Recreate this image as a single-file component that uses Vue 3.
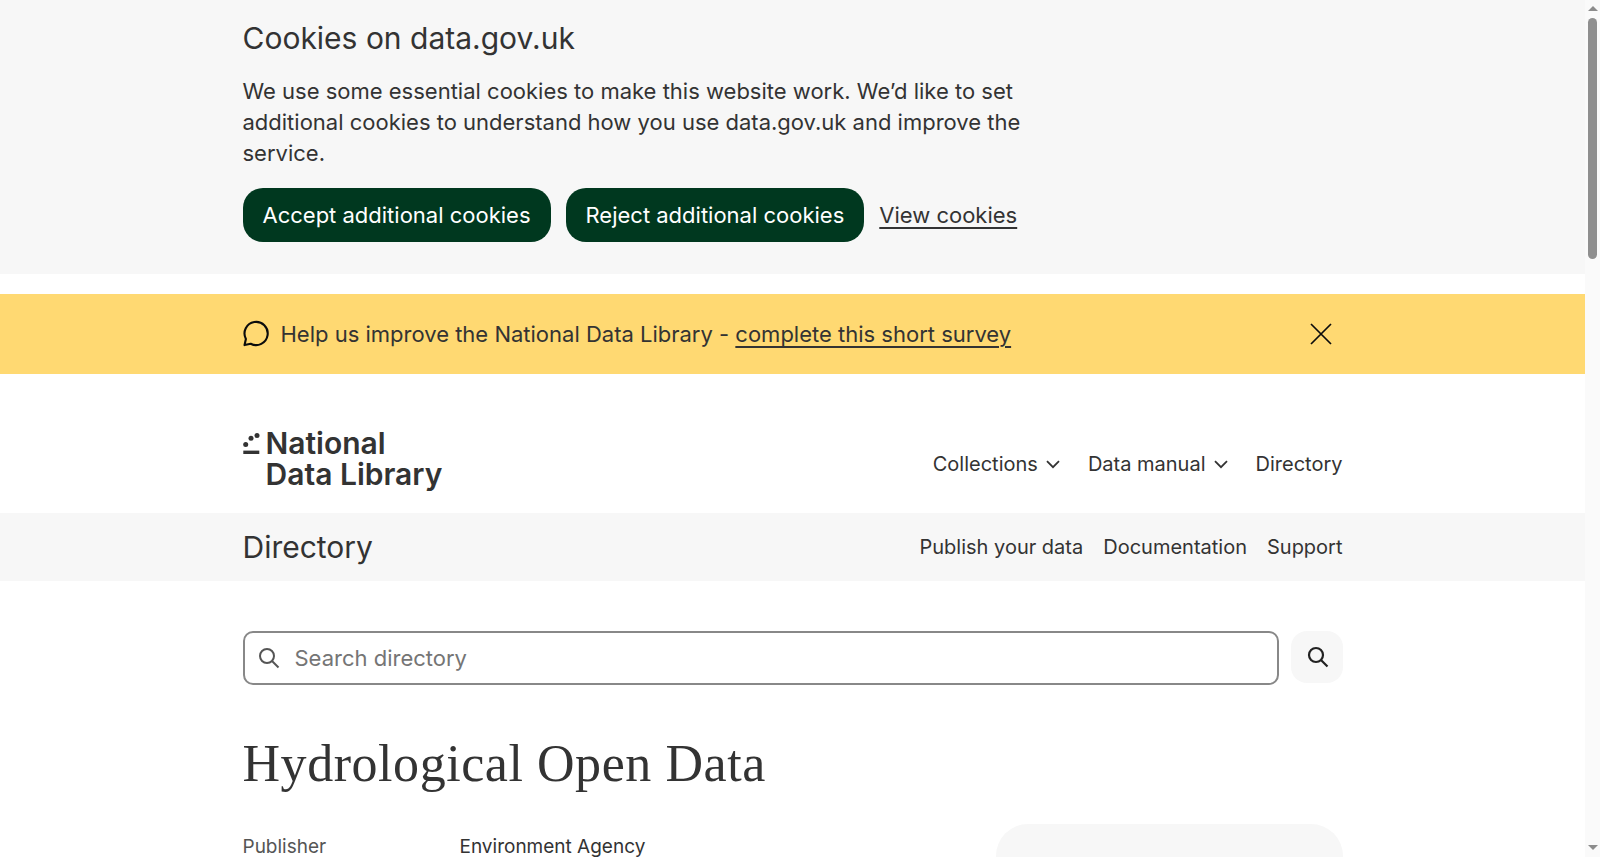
<script setup>
const nav = [
  { label: 'Collections', caret: true },
  { label: 'Data manual', caret: true },
  { label: 'Directory', caret: false }
]
const subNav = ['Publish your data', 'Documentation', 'Support']
</script>

<template>
  <div class="shell">
    <div class="page">
      <section class="cookies">
        <div class="wrap">
          <h2 class="cookiesTitle">Cookies on data.gov.uk</h2>
          <p class="cookiesText">We use some essential cookies to make this website work. We’d like to set additional cookies to understand how you use data.gov.uk and improve the service.</p>
          <div class="cookiesActions">
            <button class="btn">Accept additional cookies</button>
            <button class="btn">Reject additional cookies</button>
            <a class="link" href="#">View cookies</a>
          </div>
        </div>
      </section>

      <section class="survey">
        <div class="wrap surveyRow">
          <svg class="surveyIcon" width="27" height="27" viewBox="0 0 28 28" fill="none" stroke="#0b0c0c" stroke-width="2.2" stroke-linejoin="round">
            <path d="M1.6 26 L3 19.6 A12 12 0 1 1 8 24.6 Z" />
          </svg>
          <span class="surveyText">Help us improve the National Data Library - <a class="link" href="#">complete this short survey</a></span>
          <svg class="surveyClose" width="22" height="22" viewBox="0 0 22 22" fill="none" stroke="#0b0c0c" stroke-width="1.7">
            <path d="M1 1 L21 21 M21 1 L1 21" />
          </svg>
        </div>
      </section>

      <header class="wrap header">
        <div class="logo">
          <svg class="logoMark" width="17" height="22" viewBox="0 0 17 22" fill="#333">
            <circle cx="2.7" cy="11.4" r="2.5" />
            <circle cx="8" cy="5.2" r="2.5" />
            <circle cx="14" cy="2.5" r="2.5" />
            <rect x="0.3" y="17.6" width="16" height="3.4" />
          </svg>
          <div class="logoText">National<br />Data Library</div>
        </div>
        <nav class="mainNav">
          <a v-for="item in nav" :key="item.label" class="mainNavItem" href="#">
            {{ item.label }}
            <svg v-if="item.caret" width="14" height="9" viewBox="0 0 14 9" fill="none" stroke="#333" stroke-width="1.8">
              <path d="M1 1.2 L7 7.2 L13 1.2" />
            </svg>
          </a>
        </nav>
      </header>

      <div class="subBar">
        <div class="wrap subBarRow">
          <span class="subTitle">Directory</span>
          <nav class="subNav">
            <a v-for="item in subNav" :key="item" href="#">{{ item }}</a>
          </nav>
        </div>
      </div>

      <main class="wrap main">
        <div class="searchRow">
          <label class="searchBox">
            <svg width="22" height="22" viewBox="0 0 22 22" fill="none" stroke="#555" stroke-width="2">
              <circle cx="9" cy="9" r="7" />
              <path d="M14 14 L20.5 20.5" />
            </svg>
            <input class="searchInput" type="text" placeholder="Search directory" />
          </label>
          <button class="searchBtn" aria-label="Search">
            <svg class="searchBtnIcon" width="22" height="22" viewBox="0 0 22 22" fill="none" stroke="#222" stroke-width="2.2">
              <circle cx="9" cy="9" r="7" />
              <path d="M14 14 L20.5 20.5" />
            </svg>
          </button>
        </div>

        <h1 class="title">Hydrological Open Data</h1>

        <div class="details">
          <dl class="meta">
            <dt>Publisher</dt>
            <dd>Environment Agency</dd>
          </dl>
          <aside class="card"></aside>
        </div>
      </main>
    </div>

    <div class="scrollbar">
      <span class="arrow arrowUp"></span>
      <div class="track"><div class="thumb"></div></div>
      <span class="arrow arrowDown"></span>
    </div>
  </div>
</template>

<style>
html, body {
  margin: 0;
  background: #fff;
  overflow: hidden;
}
</style>

<style scoped>
.shell {
  display: flex;
  height: 100vh;
  overflow: hidden;
}
.page {
  flex: 1;
  min-width: 0;
  font-family: Inter, "Liberation Sans", sans-serif;
  color: #333;
}
.wrap {
  width: 1100px;
  margin: 0 auto;
}
a {
  color: #333;
  text-decoration: none;
}
.cookies {
  background: #f7f7f7;
  height: 274px;
  margin-bottom: 20px;
  padding-top: 16px;
  box-sizing: border-box;
}
.cookiesTitle {
  margin: 0 0 16px;
  font-size: 30px;
  font-weight: 400;
  line-height: 44px;
}
.cookiesText {
  margin: 0;
  width: 790px;
  font-size: 22px;
  line-height: 31px;
}
.cookiesActions {
  display: flex;
  align-items: center;
  gap: 15px;
  margin-top: 19px;
}
.btn {
  height: 54px;
  padding: 0 20px;
  border: 0;
  border-radius: 20px;
  background: #00381f;
  color: #fff;
  font: 400 22px Inter, sans-serif;
}
.link {
  font-size: 22px;
  text-decoration: underline;
  text-decoration-thickness: 2px;
  text-underline-offset: 4px;
}
.survey {
  background: #ffd972;
  height: 80px;
}
.surveyRow {
  display: flex;
  align-items: center;
  height: 100%;
}
.surveyIcon {
  flex: none;
  margin: -2px 11px 0 0;
}
.surveyText {
  font-size: 22px;
  flex: 1;
}
.surveyClose {
  margin-right: 11px;
}
.header {
  display: flex;
  justify-content: space-between;
  height: 139px;
  box-sizing: border-box;
  padding-top: 54px;
}
.logo {
  display: flex;
  align-items: flex-start;
  gap: 6px;
}
.logoMark {
  margin-top: 5px;
}
.logoText {
  font-size: 30px;
  font-weight: 600;
  line-height: 31px;
}
.mainNav {
  display: flex;
  gap: 28px;
  align-items: center;
  height: 52px;
  padding-top: 10px;
}
.mainNavItem {
  display: flex;
  align-items: center;
  gap: 8px;
  font-size: 20px;
}
.subBar {
  background: #f7f7f7;
  height: 68px;
}
.subBarRow {
  display: flex;
  justify-content: space-between;
  align-items: center;
  height: 100%;
}
.subTitle {
  font-size: 30px;
}
.subNav {
  display: flex;
  gap: 20px;
  font-size: 20px;
}
.main {
  padding-top: 50px;
}
.searchRow {
  display: flex;
  gap: 12px;
}
.searchBox {
  flex: 1;
  display: flex;
  align-items: center;
  gap: 13px;
  height: 54px;
  box-sizing: border-box;
  padding: 0 13px;
  border: 2px solid #888;
  border-radius: 10px;
}
.searchInput {
  flex: 1;
  border: 0;
  outline: 0;
  background: none;
  font: 400 22px Inter, sans-serif;
  color: #333;
}
.searchInput::placeholder {
  color: #757575;
}
.searchBtn {
  display: flex;
  align-items: center;
  justify-content: center;
  width: 52px;
  height: 52px;
  padding: 0;
  border: 0;
  border-radius: 16px;
  background: #f7f7f7;
}
.searchBtnIcon {
  margin-left: 2px;
}
.title {
  margin: 44px 0 0;
  font-family: "Liberation Serif", serif;
  font-size: 52px;
  font-weight: 400;
  line-height: 70px;
  letter-spacing: 0.55px;
}
.details {
  display: grid;
  grid-template-columns: 1fr 347px;
  margin-top: 25px;
}
.meta {
  display: grid;
  grid-template-columns: 217px 1fr;
  margin: 12px 0 0;
  font-size: 19px;
  line-height: 22px;
  align-content: start;
}
.meta dt {
  color: #555;
}
.meta dd {
  margin: 0;
}
.card {
  height: 500px;
  background: #f7f7f7;
  border-radius: 32px;
}
.scrollbar {
  flex: none;
  width: 15px;
  display: flex;
  flex-direction: column;
  align-items: center;
  background: #fafafa;
}
.arrow {
  flex: none;
  width: 0;
  height: 0;
  border-left: 5px solid transparent;
  border-right: 5px solid transparent;
}
.arrowUp {
  margin: 6px 0 7px;
  border-bottom: 5px solid #8c8c8c;
}
.arrowDown {
  margin: 7px 0 7px;
  border-top: 5px solid #8c8c8c;
}
.track {
  flex: 1;
  width: 100%;
  display: flex;
  justify-content: center;
}
.thumb {
  width: 9px;
  height: 241px;
  background: #8f8f8f;
  border-radius: 5px;
}
</style>
